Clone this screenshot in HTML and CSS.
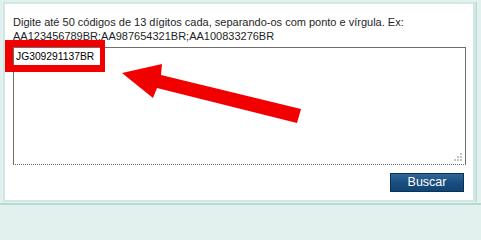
FILE: index.html
```html
<!DOCTYPE html>
<html lang="pt">
<head>
<meta charset="utf-8">
<title>Buscar objetos</title>
<link rel="stylesheet" href="styles.css">
</head>
<body>
<div class="frame">
  <div class="panel">
    <p class="hint">Digite até 50 códigos de 13 dígitos cada, separando-os com ponto e vírgula. Ex:<br>AA123456789BR;AA987654321BR;AA100833276BR</p>
    <div class="field">
      <textarea class="codes">JG309291137BR</textarea>
      <span class="grip"><i></i><i></i><i></i><i></i><i></i><i></i></span>
    </div>
    <div class="actions">
      <button class="btn" type="button">Buscar</button>
    </div>
  </div>
</div>
<svg class="annot" width="481" height="205" viewBox="0 0 481 205" aria-hidden="true">
  <path fill="#f20000" fill-rule="evenodd" d="M5 40H105V72H5Z M13 47V65H100V47Z"/>
  <path fill="#f20000" d="M122 73 L162 64 L161 75 L301 109 L297 123 L157 88 L153 98 Z"/>
</svg>
</body>
</html>
```
FILE: styles.css
```css
html, body {
  margin: 0;
  padding: 0;
}
html {
  background: #e2f0ee;
}
body {
  width: 481px;
  height: 205px;
  background: #e2f0ee;
  font-family: "Liberation Sans", Arial, sans-serif;
  position: relative;
  overflow: hidden;
}
.frame {
  box-sizing: border-box;
  height: 205px;
  padding: 2px 3px 1px 3px;
  border-bottom: 2px solid #b7d8d3;
}
.panel {
  box-sizing: border-box;
  height: 200px;
  margin-right: 2px;
  border: 2px solid #d0e7e3;
  border-right-width: 3px;
  background: #ffffff;
  padding: 11px 7px 0 8px;
  box-shadow: 1px 0 0 #b7d8d3;
}
.hint {
  margin: 0;
  font-size: 11px;
  line-height: 14px;
  color: #1e1e1e;
}
.field {
  position: relative;
  margin-top: 4px;
}
.codes {
  display: block;
  box-sizing: border-box;
  width: 453px;
  height: 118px;
  margin: 0;
  padding: 2px 2px;
  border: 1px solid #6e6e6e;
  border-bottom: 1px dotted #6e6e6e;
  resize: none;
  font-family: "Liberation Sans", Arial, sans-serif;
  font-size: 10.3px;
  line-height: 14px;
  color: #000;
  background: #fff;
  outline: none;
}
.grip {
  position: absolute;
  right: 4px;
  bottom: 3px;
  width: 9px;
  height: 9px;
}
.grip i {
  position: absolute;
  width: 2px;
  height: 2px;
  background: #c4c4c4;
}
.grip i:nth-child(1) { right: 0; top: 0; }
.grip i:nth-child(2) { right: 0; top: 3px; }
.grip i:nth-child(3) { right: 3px; top: 3px; }
.grip i:nth-child(4) { right: 0; top: 6px; }
.grip i:nth-child(5) { right: 3px; top: 6px; }
.grip i:nth-child(6) { right: 6px; top: 6px; }
.actions {
  display: flex;
  justify-content: flex-end;
  margin-top: 8px;
  padding-right: 2px;
}
.btn {
  box-sizing: border-box;
  width: 74px;
  height: 19px;
  margin: 0;
  padding: 0;
  border: 1px solid #0b3157;
  background: linear-gradient(#2f6698, #174c7e 55%, #114573);
  color: #ffffff;
  font-family: "Liberation Sans", Arial, sans-serif;
  font-size: 12.5px;
  line-height: 17px;
  cursor: pointer;
}
.annot {
  position: absolute;
  left: 0;
  top: 0;
  pointer-events: none;
}
```
